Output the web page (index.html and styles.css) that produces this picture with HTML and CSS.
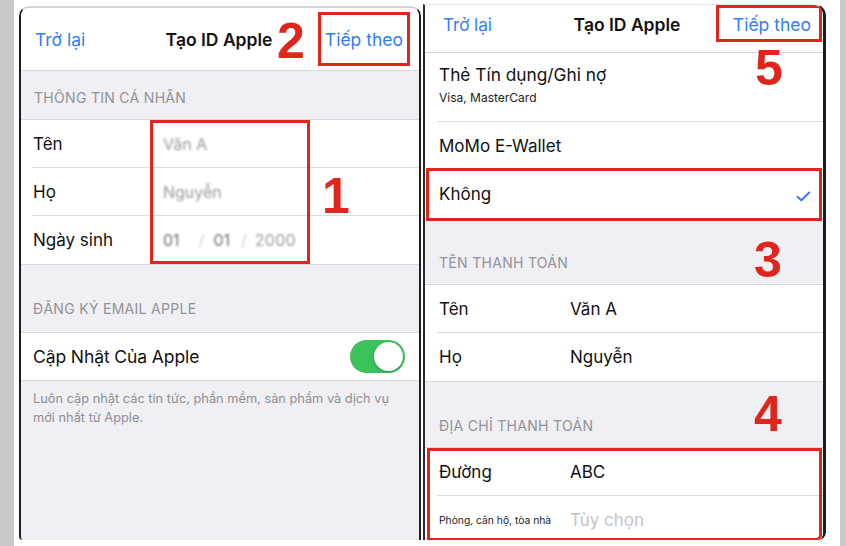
FILE: index.html
```html
<!DOCTYPE html>
<html lang="vi">
<head>
<meta charset="utf-8">
<title>Tạo ID Apple</title>
<link rel="stylesheet" href="styles.css">
</head>
<body>
<div class="stage">
  <div class="side side-left"></div>
  <div class="phone phone-left">
    <div class="nav nav-l">
      <span class="nav-link">Trở lại</span>
      <span class="nav-title">Tạo ID Apple</span>
      <span class="nav-link nav-next">Tiếp theo</span>
    </div>
    <div class="sec-head sec-head-a">THÔNG TIN CÁ NHÂN</div>
    <div class="group">
      <div class="row row-l"><span class="label">Tên</span><span class="value blur">Văn A</span></div>
      <div class="row row-l"><span class="label">Họ</span><span class="value blur">Nguyễn</span></div>
      <div class="row row-l"><span class="label">Ngày sinh</span><span class="value blur date"><span class="d">01</span><span class="sl sl-1">/</span><span class="d">01</span><span class="sl sl-2">/</span><span class="d y">2000</span></span></div>
    </div>
    <div class="sec-head sec-head-b">ĐĂNG KÝ EMAIL APPLE</div>
    <div class="group">
      <div class="row row-l row-toggle"><span class="label label-lg">Cập Nhật Của Apple</span><span class="toggle"><span class="knob"></span></span></div>
    </div>
    <p class="footer">Luôn cập nhật các tin tức, phần mềm, sản phẩm và dịch vụ<br>mới nhất từ Apple.</p>

    <div class="mark box box-next-l"></div>
    <div class="mark num num-2">2</div>
    <div class="mark box box-1"></div>
    <div class="mark num num-1">1</div>
  </div>

  <div class="phone phone-right">
    <div class="nav nav-r">
      <span class="nav-link">Trở lại</span>
      <span class="nav-title">Tạo ID Apple</span>
      <span class="nav-link nav-next">Tiếp theo</span>
    </div>
    <div class="group group-top">
      <div class="row row-r row-card"><span class="title">Thẻ Tín dụng/Ghi nợ</span><span class="sub">Visa, MasterCard</span></div>
      <div class="row row-r"><span class="label">MoMo E-Wallet</span></div>
      <div class="row row-r row-check"><span class="label">Không</span>
        <svg class="check" width="15" height="11" viewBox="0 0 15 11"><path d="M1.5 5.8 L5.3 9.3 L13.3 1.5" fill="none" stroke="#2f7ef5" stroke-width="2" stroke-linecap="round" stroke-linejoin="round"/></svg>
      </div>
    </div>
    <div class="sec-head sec-head-r">TÊN THANH TOÁN</div>
    <div class="group">
      <div class="row row-r"><span class="label">Tên</span><span class="value">Văn A</span></div>
      <div class="row row-r"><span class="label">Họ</span><span class="value">Nguyễn</span></div>
    </div>
    <div class="sec-head sec-head-r">ĐỊA CHỈ THANH TOÁN</div>
    <div class="group">
      <div class="row row-r"><span class="label">Đường</span><span class="value">ABC</span></div>
      <div class="row row-r"><span class="label lab-small">Phòng, căn hộ, tòa nhà</span><span class="value placeholder">Tùy chọn</span></div>
    </div>

    <div class="mark box box-next-r"></div>
    <div class="mark num num-5">5</div>
    <div class="mark box box-3"></div>
    <div class="mark num num-3">3</div>
    <div class="mark num num-4">4</div>
    <div class="mark box box-4"></div>
  </div>
  <div class="side side-right"></div>
</div>
</body>
</html>
```

FILE: styles.css
```css
* { box-sizing: border-box; }
html, body { margin: 0; padding: 0; background: #ffffff; }
body { font-family: Inter, "Noto Sans", "Liberation Sans", sans-serif; color: #111; }

.stage {
  width: 846px;
  height: 546px;
  display: flex;
  align-items: flex-start;
  overflow: hidden;
  background: #fff;
}
.side { height: 546px; background: #c9c9c9; flex: none; }
.side-left { width: 14px; margin-right: 5px; }
.side-right { width: 6px; margin-left: 14px; }

.phone {
  position: relative;
  flex: none;
  overflow: hidden;
  background: #efeff4;
  border-style: solid;
  border-color: #d4d4d6 #1d1d1f #1d1d1f #1d1d1f;
}
.phone-left {
  width: 402px;
  height: 534px;
  margin-top: 6px;
  border-width: 2px 2px 0 2px;
  border-radius: 10px 10px 0 4px;
}
.phone-right {
  width: 403px;
  height: 536px;
  margin-top: 4px;
  margin-left: 2px;
  border-width: 1px 3px 0 2px;
  border-color: #e6e6e8 #1d1d1f #1d1d1f #2a2a2c;
  border-radius: 0 12px 8px 0;
}

/* nav bar */
.nav {
  background: #fff;
  border-bottom: 1px solid #d6d6da;
  display: grid;
  grid-template-columns: 1fr auto 1fr;
  align-items: center;
  font-size: 17.5px;
}
.nav-l { height: 63px; padding: 0 16px 0 14px; }
.nav-r { height: 48px; padding: 0 12px 8px 18px; }
.nav-r .nav-link:first-child { font-size: 17px; }
.nav-link { color: #2f7ef5; }
.nav-next { justify-self: end; }
.nav-title { font-weight: 600; color: #111; }

/* section headers */
.sec-head {
  display: flex;
  align-items: flex-end;
  font-size: 14px;
  line-height: 17px;
  color: #929297;
  letter-spacing: 0.3px;
}
.sec-head-a { height: 48px; padding: 0 0 13px 13px; }
.sec-head-b { height: 67px; padding: 0 0 15px 12px; }
.sec-head-r { height: 65px; padding: 0 0 13px 14px; }

/* groups and rows */
.group {
  background: #fff;
  border-top: 1px solid #d8d8dc;
  border-bottom: 1px solid #d8d8dc;
}
.group-top { border-top: 0; }

.row {
  display: grid;
  align-items: center;
  height: 48px;
  font-size: 17px;
  border-bottom: 1px solid #dcdce0;
}
.row:last-child { border-bottom: 0; }
.row-l { margin-left: 11px; padding-left: 1px; grid-template-columns: 130px 1fr; }
.row-r { margin-left: 12px; padding-left: 2px; grid-template-columns: 131px 1fr; }
.row-toggle { height: 47px; grid-template-columns: 1fr auto; padding-right: 14px; }
.label { color: #111; }
.label-lg { font-size: 17.5px; letter-spacing: -0.1px; }

.value { color: #111; }
.blur { color: #9a9a9a; filter: blur(1.1px); font-size: 16px; }
.date { display: flex; align-items: center; color: #6f6f6f; }
.date .sl { color: #cfcfcf; }
.date .sl-1 { margin: 0 9px 0 19px; }
.date .sl-2 { margin: 0 8px 0 11px; }
.date .y { color: #9a9a9a; letter-spacing: 0.3px; }

.row-card {
  height: 69px;
  display: flex;
  flex-direction: column;
  align-items: flex-start;
  justify-content: flex-start;
  padding-top: 12px;
  gap: 5px;
}
.title { font-size: 17.3px; line-height: 20px; }
.sub { font-size: 12px; line-height: 15px; color: #222; }
.row-check { grid-template-columns: 1fr auto; padding-right: 12px; }
.check { display: block; margin-top: 4px; }

.lab-small { font-size: 10.3px; color: #222; }
.placeholder { color: #c4c4c8; }

/* toggle */
.toggle {
  width: 55px;
  height: 33px;
  border-radius: 17px;
  background: #3cc25a;
  display: flex;
  align-items: center;
  justify-content: flex-end;
  padding: 2px;
}
.knob {
  width: 29px;
  height: 29px;
  border-radius: 50%;
  background: #fff;
  box-shadow: 0 1px 3px rgba(0,0,0,0.25);
}

.footer {
  margin: 0;
  padding: 8px 0 0 12px;
  font-size: 12.8px;
  line-height: 19px;
  color: #8e8e93;
}

/* annotations */
.mark { position: absolute; }
.box { border: 3px solid #e0261c; }
.num {
  font-family: "Liberation Sans", Arial, sans-serif;
  font-weight: 700;
  font-size: 50px;
  line-height: 50px;
  color: #e0261c;
}
.box-next-l { left: 297px; top: 4px; width: 92px; height: 54px; }
.num-2 { left: 256px; top: 8px; }
.box-1 { left: 129px; top: 112px; width: 160px; height: 144px; }
.num-1 { left: 301px; top: 163px; }

.box-next-r { left: 291px; top: 0; width: 106px; height: 37px; border-top-right-radius: 4px; }
.num-5 { left: 330px; top: 38px; }
.box-3 { left: 1px; top: 163px; width: 396px; height: 53px; }
.num-3 { left: 329px; top: 230px; }
.num-4 { left: 329px; top: 384px; }
.box-4 { left: 2px; top: 443px; width: 395px; height: 93px; border-bottom-right-radius: 6px; }
```
